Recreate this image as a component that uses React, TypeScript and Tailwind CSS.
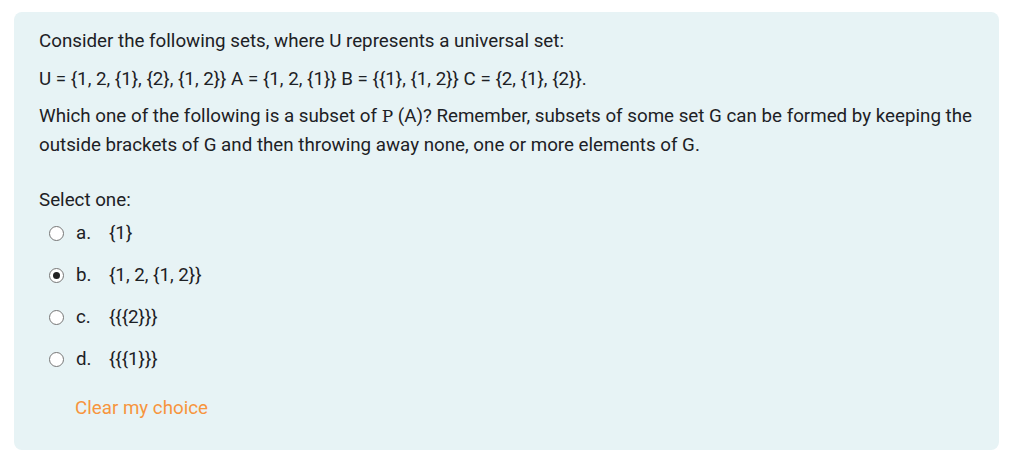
import { useState } from 'react';

const options = [
  { key: 'a', text: '{1}' },
  { key: 'b', text: '{1, 2, {1, 2}}' },
  { key: 'c', text: '{{{2}}}' },
  { key: 'd', text: '{{{1}}}' },
];

export default function App() {
  const [selected, setSelected] = useState<string | null>('b');

  return (
    <div className="min-h-screen bg-white px-[14px] pt-[12px] font-['Roboto',sans-serif] text-[#1d2125]">
      <div className="w-[985px] rounded-[8px] bg-[#e7f3f5] pl-[25px] pr-[20px] pt-[15px] pb-[27px]">
        <div className="text-[18.75px] leading-[29px]">
          <p className="mb-[9px]">Consider the following sets, where U represents a universal set:</p>
          <p className="mb-[8px]">
            U = {'{1, 2, {1}, {2}, {1, 2}}'} A = {'{1, 2, {1}}'} B = {'{{1}, {1, 2}}'} C = {'{2, {1}, {2}}'}.
          </p>
          <p>
            Which one of the following is a subset of{' '}
            <span className="font-['DejaVu_Serif',serif] text-[17px]">P</span> (A)? Remember, subsets of some
            set G can be formed by keeping the outside brackets of G and then throwing away none, one or more
            elements of G.
          </p>
        </div>

        <div className="mt-[26px] text-[18.75px] leading-[29px]">Select one:</div>

        <div className="-mt-[3px] flex flex-col">
          {options.map((o) => (
            <label key={o.key} className="flex h-[42px] cursor-pointer items-center text-[18.75px]">
              <span className="ml-[10px] flex h-[15px] w-[15px] items-center justify-center rounded-full border-[1.5px] border-[#767676] bg-white">
                {selected === o.key && <span className="h-[7px] w-[7px] rounded-full bg-[#222]" />}
              </span>
              <input
                type="radio"
                name="answer"
                className="hidden"
                checked={selected === o.key}
                onChange={() => setSelected(o.key)}
              />
              <span className="ml-[12px] w-[33px]">{o.key}.</span>
              <span>{o.text}</span>
            </label>
          ))}
        </div>

        <button
          type="button"
          onClick={() => setSelected(null)}
          className="ml-[36px] mt-[14px] block text-[18.75px] leading-[29px] text-[#f7953d]"
        >
          Clear my choice
        </button>
      </div>
    </div>
  );
}
